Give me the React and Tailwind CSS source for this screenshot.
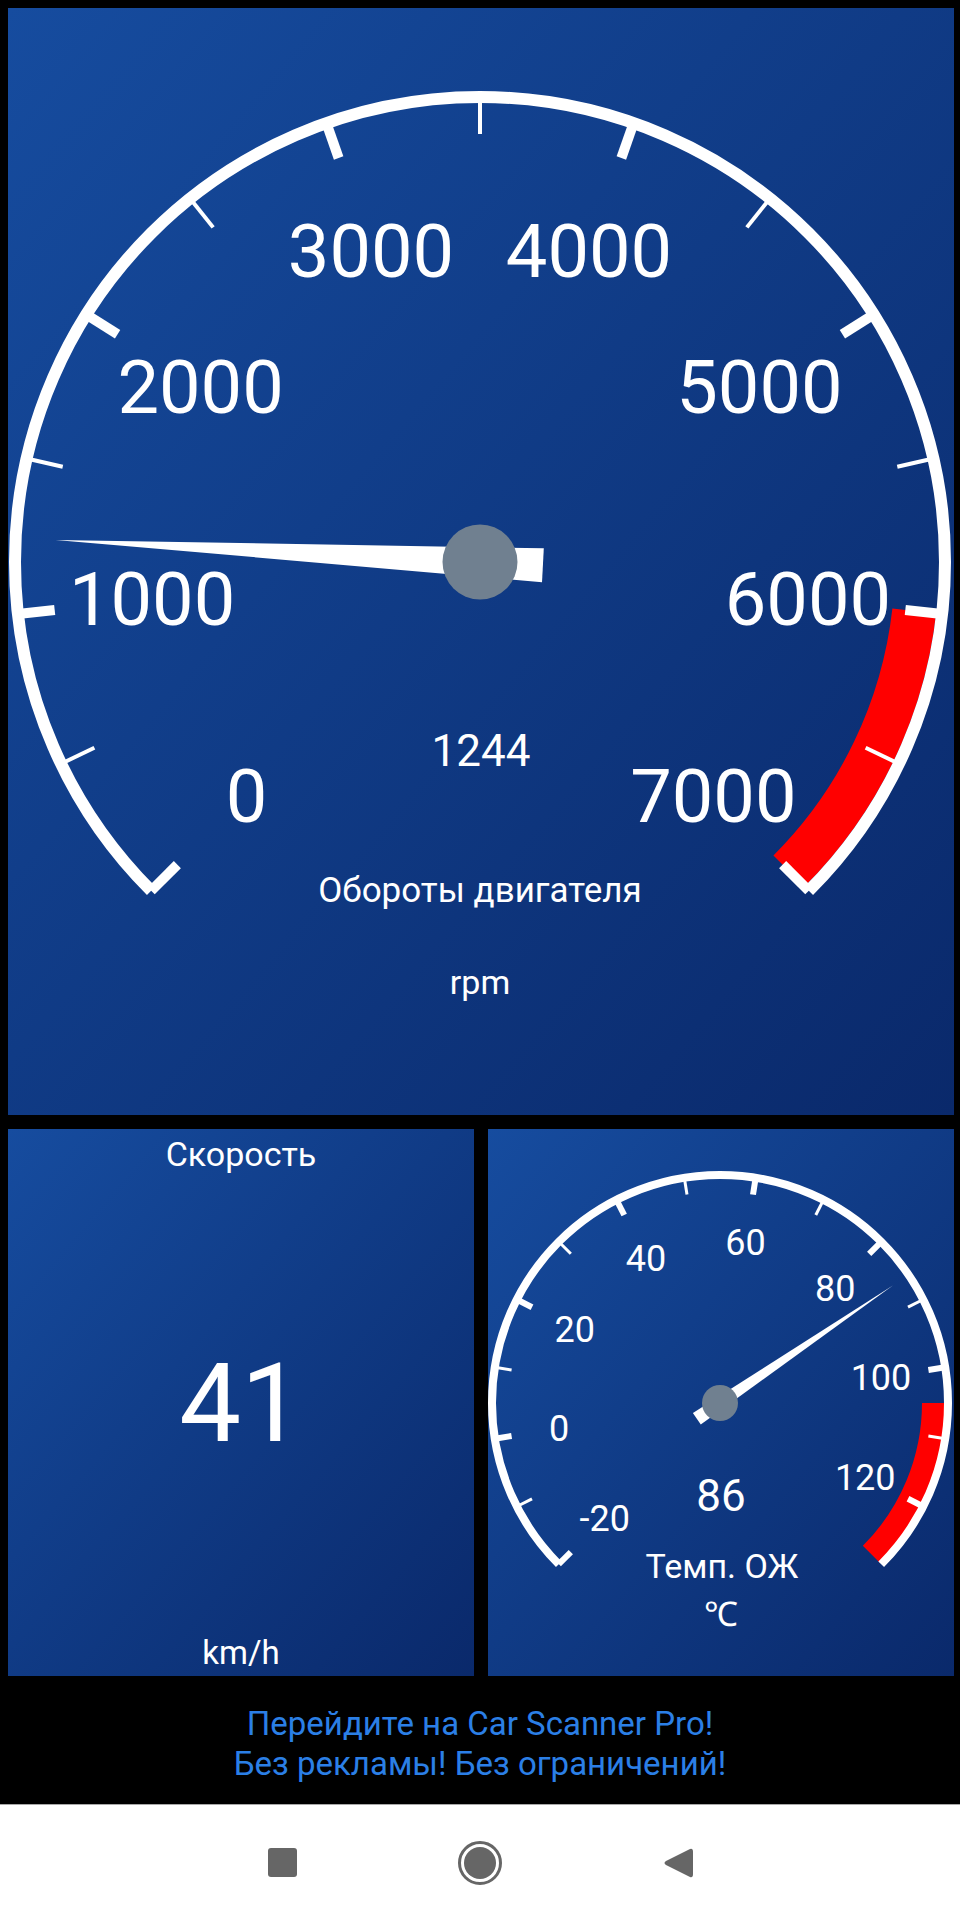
import React from 'react';

const FONT = "Roboto, 'Noto Sans', 'DejaVu Sans', sans-serif";

function polar(cx, cy, r, deg) {
  const a = (deg * Math.PI) / 180;
  return [cx + r * Math.cos(a), cy - r * Math.sin(a)];
}

// clockwise (on screen) arc from angle a0 down to a1
function arcPath(cx, cy, r, a0, a1) {
  const [x0, y0] = polar(cx, cy, r, a0);
  const [x1, y1] = polar(cx, cy, r, a1);
  const large = a0 - a1 > 180 ? 1 : 0;
  return `M ${x0} ${y0} A ${r} ${r} 0 ${large} 1 ${x1} ${y1}`;
}

function Gauge({ g }) {
  const angle = (v) => 225 - ((v - g.min) * 270) / (g.max - g.min);

  const ticks = [];
  for (let v = g.min; v <= g.tickMax; v += g.step) {
    const thick = (v - g.min) % (g.step * 2) === 0;
    const [x0, y0] = polar(g.cx, g.cy, g.tickOut, angle(v));
    const [x1, y1] = polar(g.cx, g.cy, g.tickIn, angle(v));
    ticks.push(
      <line key={v} x1={x0} y1={y0} x2={x1} y2={y1} stroke="white" strokeWidth={thick ? g.thickW : g.thinW} />
    );
  }

  const labels = [];
  for (let v = g.min; v <= g.labelMax; v += g.step * 2) {
    const [x, y] = polar(g.cx, g.cy, g.labelR, angle(v));
    labels.push(
      <text key={v} x={x} y={y + g.labelSize * 0.355} textAnchor="middle" fontSize={g.labelSize} fill="white" fontFamily={FONT}>
        {v}
      </text>
    );
  }

  // needle: wide at the tail, pointed at the tip
  const na = angle(g.value);
  const rad = (na * Math.PI) / 180;
  const px = Math.sin(rad);
  const py = Math.cos(rad);
  const [tx, ty] = polar(g.cx, g.cy, g.needleLen, na);
  const [bx, by] = polar(g.cx, g.cy, g.needleTail, na + 180);
  const needle = `${tx},${ty} ${bx + px * g.needleHalf},${by + py * g.needleHalf} ${bx - px * g.needleHalf},${by - py * g.needleHalf}`;

  return (
    <svg width={g.w} height={g.h} viewBox={`${g.x} ${g.y} ${g.w} ${g.h}`} className="block">
      <path d={arcPath(g.cx, g.cy, g.redR, angle(g.redFrom), -45)} stroke="#ff0000" strokeWidth={g.redW} fill="none" />
      <path d={arcPath(g.cx, g.cy, g.arcR, 225, -45)} stroke="white" strokeWidth={g.arcW} fill="none" />
      {ticks}
      {labels}
      {g.texts.map((t) => (
        <text key={t.s} x={t.x} y={t.y + t.size * 0.355} textAnchor="middle" fontSize={t.size} fill="white" fontFamily={FONT}>
          {t.s}
        </text>
      ))}
      <polygon points={needle} fill="white" />
      <circle cx={g.cx} cy={g.cy} r={g.hubR} fill="#708090" />
    </svg>
  );
}

const RPM = {
  x: 8, y: 8, w: 946, h: 1107,
  cx: 480, cy: 562, min: 0, max: 7000, step: 500, tickMax: 7000, labelMax: 7000,
  arcR: 465, arcW: 12, tickOut: 465, tickIn: 428, thickW: 10, thinW: 4,
  redFrom: 6000, redR: 437, redW: 44,
  labelR: 330, labelSize: 74,
  value: 1244, needleLen: 425, needleTail: 63, needleHalf: 17, hubR: 37.5,
  texts: [
    { s: '1244', x: 481, y: 750, size: 44 },
    { s: 'Обороты двигателя', x: 480, y: 890, size: 35 },
    { s: 'rpm', x: 480, y: 982, size: 34 },
  ],
};

const TEMP = {
  x: 488, y: 1129, w: 466, h: 547,
  cx: 720, cy: 1403, min: -20, max: 130, step: 10, tickMax: 120, labelMax: 120,
  arcR: 228, arcW: 8, tickOut: 228, tickIn: 211, thickW: 6, thinW: 3,
  redFrom: 105, redR: 214, redW: 24,
  labelR: 163, labelSize: 36,
  value: 86, needleLen: 209, needleTail: 28, needleHalf: 7, hubR: 18,
  texts: [
    { s: '86', x: 721, y: 1495, size: 44 },
    { s: 'Темп. ОЖ', x: 722, y: 1566, size: 34 },
    { s: '℃', x: 721, y: 1614, size: 34 },
  ],
};

const panel = 'bg-linear-to-br from-[#164c9f] to-[#0a296b]';

export default function App() {
  return (
    <div className="w-[960px] h-[1920px] bg-black flex flex-col text-white" style={{ fontFamily: FONT }}>
      <div className="pl-[8px] pr-[6px] pt-[8px] flex flex-col gap-[14px]">
        <div className={`h-[1107px] ${panel}`}>
          <Gauge g={RPM} />
        </div>

        <div className="flex gap-[14px] h-[547px]">
          <div className={`flex-1 flex flex-col items-center ${panel}`}>
            <div className="mt-[5px] text-[34px] leading-[40px]">Скорость</div>
            <div className="flex-1 flex items-center text-[110px] leading-none">41</div>
            <div className="mb-[3px] text-[33px] leading-[40px]">km/h</div>
          </div>
          <div className={`flex-1 ${panel}`}>
            <Gauge g={TEMP} />
          </div>
        </div>
      </div>

      <div className="h-[128px] pt-[28px] text-center text-[33px] leading-[40px] text-[#2b7fe6]">
        <div>Перейдите на Car Scanner Pro!</div>
        <div>Без рекламы! Без ограничений!</div>
      </div>

      <div className="flex-1 bg-white border-t border-[#a8a8a8] flex items-center justify-center">
        <div className="w-[198px] flex justify-center">
          <div className="w-[29px] h-[29px] rounded-[3px] bg-[#666666]" />
        </div>
        <div className="w-[198px] flex justify-center">
          <div className="w-[44px] h-[44px] rounded-full border-[3px] border-[#666666] flex items-center justify-center">
            <div className="w-[32px] h-[32px] rounded-full bg-[#666666]" />
          </div>
        </div>
        <div className="w-[198px] flex justify-center">
          <svg width="30" height="32" viewBox="0 0 30 32">
            <path d="M27 2 Q30 1 30 5 L30 27 Q30 31 27 30 L3 18 Q0 16 3 14 Z" fill="#666666" />
          </svg>
        </div>
      </div>
    </div>
  );
}
